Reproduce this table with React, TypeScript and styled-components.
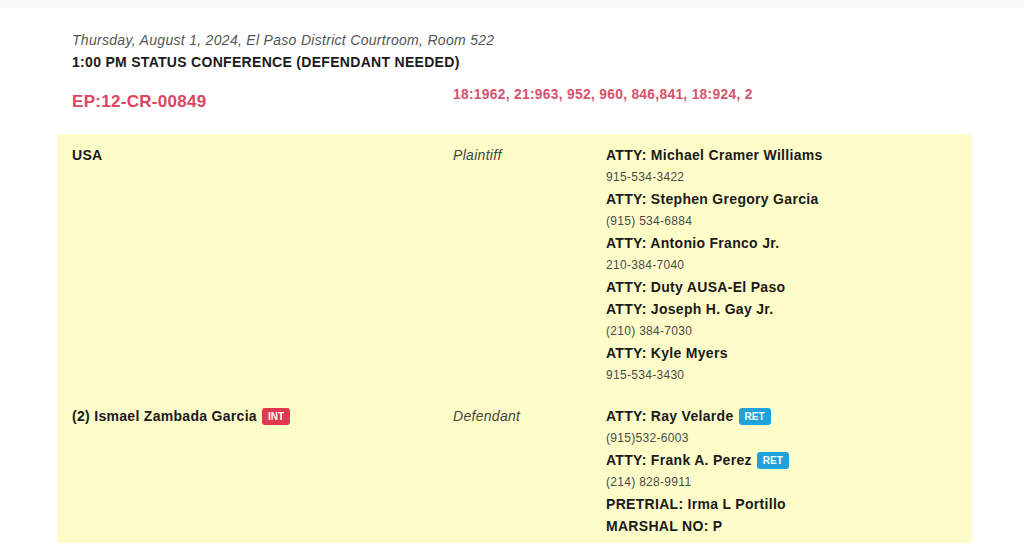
import React, { FC } from 'react';
import { createGlobalStyle, styled } from 'styled-components';

type Attorney = {
    label: string;
    name: string;
    phone?: string;
    badge?: string;
};

type Party = {
    name: string;
    role: string;
    badge?: string;
    lines: Attorney[];
};

const parties: Party[] = [
    {
        name: 'USA',
        role: 'Plaintiff',
        lines: [
            { label: 'ATTY', name: 'Michael Cramer Williams', phone: '915-534-3422' },
            { label: 'ATTY', name: 'Stephen Gregory Garcia', phone: '(915) 534-6884' },
            { label: 'ATTY', name: 'Antonio Franco Jr.', phone: '210-384-7040' },
            { label: 'ATTY', name: 'Duty AUSA-El Paso' },
            { label: 'ATTY', name: 'Joseph H. Gay Jr.', phone: '(210) 384-7030' },
            { label: 'ATTY', name: 'Kyle Myers', phone: '915-534-3430' },
        ],
    },
    {
        name: '(2) Ismael Zambada Garcia',
        role: 'Defendant',
        badge: 'INT',
        lines: [
            { label: 'ATTY', name: 'Ray Velarde', phone: '(915)532-6003', badge: 'RET' },
            { label: 'ATTY', name: 'Frank A. Perez', phone: '(214) 828-9911', badge: 'RET' },
            { label: 'PRETRIAL', name: 'Irma L Portillo' },
            { label: 'MARSHAL NO', name: 'P' },
        ],
    },
];

const GlobalStyle = createGlobalStyle`
    html, body {
        margin: 0;
        padding: 0;
        background: #fff;
    }
    body {
        font-family: 'Liberation Sans', Arial, sans-serif;
        color: #1e1e1e;
        letter-spacing: 0.3px;
    }
`;

export default function App() {
    return (
        <>
            <GlobalStyle />
            <TopBand />
            <Page>
                <Header>
                    <DateLine>Thursday, August 1, 2024, El Paso District Courtroom, Room 522</DateLine>
                    <Hearing>1:00 PM STATUS CONFERENCE (DEFENDANT NEEDED)</Hearing>
                    <CaseRow>
                        <CaseNumber>EP:12-CR-00849</CaseNumber>
                        <Charges>18:1962, 21:963, 952, 960, 846,841, 18:924, 2</Charges>
                    </CaseRow>
                </Header>
                <Parties>
                    {parties.map((p) => (
                        <PartyRow key={p.name} party={p} />
                    ))}
                </Parties>
            </Page>
        </>
    );
}

const PartyRow: FC<{ party: Party }> = ({ party }) => {
    return (
        <Row>
            <PartyName>
                {party.name}
                {party.badge && <Badge $tone="red">{party.badge}</Badge>}
            </PartyName>
            <Role>{party.role}</Role>
            <Counsel>
                {party.lines.map((a, i) => (
                    <React.Fragment key={i}>
                        <CounselName>
                            {a.label}: {a.name}
                            {a.badge && <Badge $tone="blue">{a.badge}</Badge>}
                        </CounselName>
                        {a.phone && <Phone>{a.phone}</Phone>}
                    </React.Fragment>
                ))}
            </Counsel>
        </Row>
    );
};

const TopBand = styled.div`
    height: 8px;
    background: #f9f9f9;
`;

const Page = styled.div`
    width: 915px;
    margin-left: 57px;
`;

const Header = styled.div`
    padding: 22px 15px 22px;
`;

const DateLine = styled.div`
    font-size: 14px;
    line-height: 20px;
    font-style: italic;
    color: #555;
`;

const Hearing = styled.div`
    margin-top: 2px;
    font-size: 14px;
    line-height: 20px;
    font-weight: bold;
    color: #1a1a1a;
`;

const CaseRow = styled.div`
    display: grid;
    grid-template-columns: 381px 1fr;
    align-items: start;
    margin-top: 15px;
`;

const CaseNumber = styled.div`
    padding-top: 5px;
    font-size: 17px;
    line-height: 20px;
    font-weight: bold;
    color: #dc4661;
`;

const Charges = styled.div`
    font-size: 13.8px;
    line-height: 16px;
    font-weight: bold;
    color: #d5536c;
`;

const Parties = styled.div`
    background: #fefdc9;
`;

const Row = styled.div`
    display: grid;
    grid-template-columns: 381px 153px 1fr;
    padding: 10px 15px 9px;
    line-height: 22px;
`;

const PartyName = styled.div`
    font-size: 14px;
    font-weight: bold;
    color: #1a1a1a;
`;

const Role = styled.div`
    font-size: 14px;
    font-style: italic;
    color: #444;
`;

const Counsel = styled.div`
    display: flex;
    flex-direction: column;
`;

const CounselName = styled.div`
    font-size: 14px;
    font-weight: bold;
    color: #1a1a1a;
`;

const Phone = styled.div`
    font-size: 12px;
    color: #4a4a4a;
`;

const Badge = styled.span<{ $tone: 'red' | 'blue' }>`
    display: inline-block;
    margin-left: 5px;
    padding: 0 6px;
    height: 17px;
    line-height: 17px;
    border-radius: 3px;
    font-size: 10px;
    font-weight: bold;
    letter-spacing: 0;
    color: #fff;
    vertical-align: 1px;
    background: ${(p) => (p.$tone === 'red' ? '#e0384f' : '#1fa2dc')};
`;
